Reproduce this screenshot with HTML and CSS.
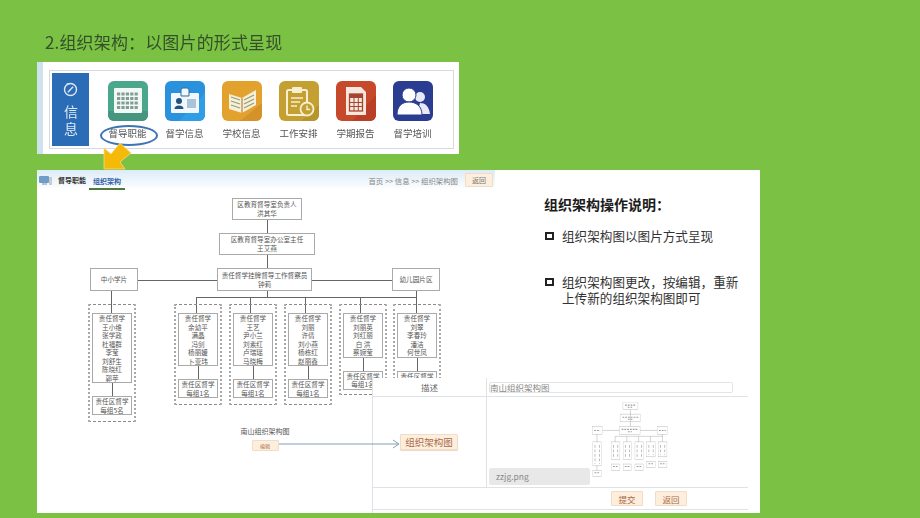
FILE: index.html
```html
<!DOCTYPE html>
<html lang="zh-CN">
<head>
  <meta charset="UTF-8" />
  <title>组织架构</title>
  <link rel="stylesheet" href="styles.css">
</head>
<body>
  <div class="slide">
    <h1 class="slide-title">2.组织架构：以图片的形式呈现</h1>

    <!-- 顶部菜单截图 -->
    <div class="nav-strip">
      <div class="nav-inner">
        <div class="nav-side">
          <svg class="nav-side-icon" viewBox="0 0 16 16"><circle cx="8" cy="8" r="6.4" fill="none" stroke="#dce8f5" stroke-width="1.5"/><path d="M5.2 11 L10.8 5" stroke="#dce8f5" stroke-width="1.5" fill="none"/><path d="M4 1.6 L6 2.4" stroke="#dce8f5" stroke-width="1.2"/></svg>
          <span class="nav-side-text">信息</span>
        </div>

        <div class="nav-item">
          <svg class="tile" viewBox="0 0 40 40">
            <rect width="40" height="40" rx="6" fill="#4ba78b"/>
            <path d="M0 30 H40 V34 a6 6 0 0 1 -6 6 H6 a6 6 0 0 1 -6 -6 Z" fill="#46957e"/>
            <rect x="6" y="7" width="28" height="25" rx="1" fill="#f4f8f5"/>
            <path d="M9 13 h22 M9 17.500 h22 M9 22 h22 M9 26.500 h22" stroke="#7f9f96" stroke-width="3" stroke-dasharray="3.200 1.200"/>
          </svg>
          <span class="nav-label">督导职能</span>
          <span class="ring"></span>
        </div>

        <div class="nav-item">
          <svg class="tile" viewBox="0 0 40 40">
            <rect width="40" height="40" rx="6" fill="#2a91dc"/>
            <path d="M40 12 V34 a6 6 0 0 1 -6 6 H14 Z" fill="#2f9ee6"/>
            <rect x="6" y="12" width="28" height="20" rx="1" fill="#f2f7fb"/>
            <path d="M16 12 v-3 a2 2 0 0 1 2 -2 h4 a2 2 0 0 1 2 2 v3 v3 h-8 Z" fill="#f2f7fb" stroke="#2a6fa8"/>
            <circle cx="14" cy="20" r="3" fill="#24527e"/>
            <path d="M9.500 28 a4.500 3.500 0 0 1 9 0 Z" fill="#24527e"/>
            <rect x="22" y="18" width="9" height="9" fill="#a9c3d8"/>
          </svg>
          <span class="nav-label">督学信息</span>
        </div>

        <div class="nav-item">
          <svg class="tile" viewBox="0 0 40 40">
            <rect width="40" height="40" rx="6" fill="#e3a12d"/>
            <path d="M40 22 V34 a6 6 0 0 1 -6 6 H18 Z" fill="#d6922a"/>
            <path d="M7 13 L20 17 L34 9 V24 L20 32 L7 28 Z" fill="#f7efd9"/>
            <path d="M20 17 V32" stroke="#c59a55" stroke-width="1.500"/>
            <path d="M9 16 l9 3 M9 20 l9 3 M9 24 l9 3 M22 19 l10 -5 M22 23 l10 -5 M22 27 l10 -5" stroke="#8fa173" stroke-width="1.200"/>
          </svg>
          <span class="nav-label">学校信息</span>
        </div>

        <div class="nav-item">
          <svg class="tile" viewBox="0 0 40 40">
            <rect width="40" height="40" rx="6" fill="#c4a032"/>
            <path d="M40 24 V34 a6 6 0 0 1 -6 6 H22 Z" fill="#b8942d"/>
            <rect x="8" y="9" width="20" height="25" rx="1.500" fill="none" stroke="#f6efd2" stroke-width="2"/>
            <rect x="13" y="6" width="10" height="6" rx="1" fill="#f6efd2"/>
            <path d="M12 17 h12 M12 21 h9 M12 25 h6" stroke="#f6efd2" stroke-width="1.600"/>
            <circle cx="28" cy="28" r="6.500" fill="#c4a032" stroke="#f6efd2" stroke-width="1.800"/>
            <path d="M28 24.500 V28.500 H31" fill="none" stroke="#f6efd2" stroke-width="1.400"/>
          </svg>
          <span class="nav-label">工作安排</span>
        </div>

        <div class="nav-item">
          <svg class="tile" viewBox="0 0 40 40">
            <rect width="40" height="40" rx="6" fill="#c7492c"/>
            <path d="M40 14 V34 a6 6 0 0 1 -6 6 H16 Z" fill="#b94026"/>
            <path d="M10 6 H25 L30 11 V34 H10 Z" fill="#f5e9df"/>
            <rect x="13.500" y="13" width="13" height="17" fill="none" stroke="#a8452f" stroke-width="1.300"/>
            <rect x="13.500" y="13" width="13" height="4" fill="#a8452f"/>
            <path d="M13.500 21.500 h13 M13.500 25.500 h13 M18 17 v13 M22.300 17 v13" stroke="#a8452f" stroke-width="1"/>
          </svg>
          <span class="nav-label">学期报告</span>
        </div>

        <div class="nav-item">
          <svg class="tile" viewBox="0 0 40 40">
            <rect width="40" height="40" rx="6" fill="#2b3d90"/>
            <circle cx="27" cy="16" r="5" fill="#e8ebf5"/>
            <path d="M27 22 c5 0 9 3 10 11 H24 Z" fill="#e8ebf5"/>
            <circle cx="16" cy="14" r="7" fill="#fff" stroke="#2b3d90"/>
            <path d="M16 21 c-7 0 -12 4 -12 13 H29 c0 -9 -6 -13 -13 -13 Z" fill="#fff" stroke="#2b3d90"/>
          </svg>
          <span class="nav-label">督学培训</span>
        </div>
      </div>
    </div>

    <svg class="pointer" viewBox="0 0 29 28"><path d="M1 6 V27 H22 L17 20 L28 11 L17 1 L8 12 Z" fill="#f5ba08" stroke="#f8d98a" stroke-width="0.800"/></svg>

    <!-- 系统页面截图 -->
    <div class="screen">
      <div class="board">
        <div class="page-bar">
          <svg class="page-icon" viewBox="0 0 14 11"><rect x="0" y="1" width="10" height="7" rx="1" fill="#6f9cc8"/><rect x="10" y="2" width="3" height="8" fill="#c8ccd2"/><rect x="3" y="8" width="5" height="2" fill="#b8c4d2"/></svg>
          <span class="page-tab">督导职能</span>
          <span class="page-tab current">组织架构</span>
          <span class="crumbs">首页 &gt;&gt; 信息 &gt;&gt; 组织架构图</span>
          <span class="btn back">返回</span>
        </div>

        <div class="node n-head">区教育督导室负责人<br>洪其华</div>
        <div class="node n-office">区教育督导室办公室主任<br>王艾燕</div>
        <div class="node n-lead">责任督学挂牌督导工作督察员<br>钟莉</div>
        <div class="node n-primary">中小学片</div>
        <div class="node n-kinder">幼儿园片区</div>

        <div class="line v l-a"></div>
        <div class="line v l-b"></div>
        <div class="line v l-c"></div>
        <div class="line h l-d"></div>
        <div class="line h l-e"></div>
        <div class="line h l-f"></div>
        <div class="line v l-g"></div>
        <div class="line v l-1"></div>
        <div class="line v l-2"></div>
        <div class="line v l-3"></div>
        <div class="line v l-4"></div>
        <div class="line v l-5"></div>

        <div class="col col-0">
          <div class="staff">责任督学<br>王小维<br>张学政<br>杜福群<br>李莹<br>刘舒生<br>陈晓红<br>郭苹</div>
          <div class="quota">责任区督学<br>每组5名</div>
        </div>
        <div class="col col-1">
          <div class="staff">责任督学<br>余幼平<br>满晶<br>冯剑<br>杨丽媛<br>卜亚玮</div>
          <div class="quota">责任区督学<br>每组1名</div>
        </div>
        <div class="col col-2">
          <div class="staff">责任督学<br>王艺<br>尹小兰<br>刘素红<br>卢瑞瑶<br>马晓梅</div>
          <div class="quota">责任区督学<br>每组1名</div>
        </div>
        <div class="col col-3">
          <div class="staff">责任督学<br>刘丽<br>许倩<br>刘小燕<br>杨栋红<br>赵丽鑫</div>
          <div class="quota">责任区督学<br>每组1名</div>
        </div>
        <div class="col col-4">
          <div class="staff">责任督学<br>刘丽英<br>刘红丽<br>白 洪<br>蔡婉莹</div>
          <div class="quota">责任区督学<br>每组1名</div>
        </div>
        <div class="col col-5">
          <div class="staff">责任督学<br>刘翠<br>李春玲<br>潘洁<br>何世凤</div>
          <div class="quota">责任区督学</div>
        </div>

        <div class="chart-file">
          <span>南山组织架构图</span>
          <span class="btn edit">编辑</span>
        </div>
      </div>

      <div class="notes">
        <h2>组织架构操作说明：</h2>
        <ul>
          <li>组织架构图以图片方式呈现</li>
          <li>组织架构图更改，按编辑，重新上传新的组织架构图即可</li>
        </ul>
      </div>

      <!-- 编辑弹出的表单 -->
      <div class="edit-form">
        <div class="cell label">描述</div>
        <div class="cell value"><div class="desc-input">南山组织架构图</div></div>
        <div class="cell label"><span class="btn pick">组织架构图</span></div>
        <div class="cell value upload">
          <div class="file-name">zzjg.png</div>
          <svg class="thumb" viewBox="88 198 354 225" preserveAspectRatio="none">
            <g fill="#fff" stroke="#bbb" vector-effect="non-scaling-stroke" stroke-width="1.500">
              <rect x="232" y="198" width="70" height="22"/>
              <rect x="219" y="233" width="96" height="22"/>
              <rect x="217" y="268" width="95" height="23"/>
              <rect x="90" y="268" width="48" height="23"/>
              <rect x="392" y="268" width="48" height="23"/>
              <rect x="92" y="313" width="40" height="69"/>
              <rect x="92" y="395" width="40" height="18"/>
              <rect x="178" y="313" width="40" height="51"/>
              <rect x="178" y="377" width="40" height="18"/>
              <rect x="233" y="313" width="40" height="51"/>
              <rect x="233" y="377" width="40" height="18"/>
              <rect x="288" y="313" width="40" height="51"/>
              <rect x="288" y="377" width="40" height="18"/>
              <rect x="343" y="313" width="40" height="43"/>
              <rect x="343" y="369" width="40" height="18"/>
              <rect x="397" y="313" width="40" height="43"/>
              <rect x="397" y="369" width="40" height="18"/>
            </g>
            <path d="M138 280 H217 M312 280 H392 M267 220 V268 M196 297 H416 M111 291 V313 M416 291 V313 M196 297 V313 M250 297 V313 M305 297 V313 M360 297 V313 M111 382 V395" stroke="#999" stroke-width="1.500" fill="none"/>
            <path d="M242 207 h50 M254 213 h26 M230 242 h74 M255 248 h24 M226 277 h78 M256 284 h18 M98 280 h28 M400 280 h32 M102 322 V376 M188 322 V358 M243 322 V358 M298 322 V358 M353 322 V350 M407 322 V350 M122 322 V376 M208 322 V358 M263 322 V358 M318 322 V358 M373 322 V350 M427 322 V350 M100 402 h24 M186 384 h24 M241 384 h24 M296 384 h24 M351 376 h24 M405 376 h24" stroke="#9a9a9a" stroke-width="3" stroke-dasharray="8 5" fill="none"/>
          </svg>
        </div>
        <div class="cell actions">
          <span class="btn">提交</span>
          <span class="btn">返回</span>
        </div>
      </div>

      <svg class="link-arrow" viewBox="0 0 122 10"><path d="M0 5 H119 M114 1 L120 5 L114 9" fill="none" stroke="#7fa0b8" stroke-width="1"/></svg>
    </div>
  </div>
</body>
</html>
```

FILE: styles.css
```css
* {
  box-sizing: border-box;
}

body {
  margin: 0;
  background: #7bc143;
  font-family: "Noto Sans CJK SC", "Liberation Sans", sans-serif;
}

.slide {
  position: relative;
  width: 920px;
  height: 518px;
  padding: 30px 0 0 37px;
  overflow: hidden;
  filter: blur(0.4px);
}

.slide-title {
  margin: 0 0 8px 8px;
  height: 24px;
  font-size: 17px;
  line-height: 24px;
  letter-spacing: 0.15px;
  font-weight: 400;
  color: #33502a;
}

/* menu strip */
.nav-strip {
  width: 422px;
  height: 92px;
  padding: 8px 5px 5px 6px;
  background: #fff;
  border-left: 6px solid #cfe3ee;
}

.nav-inner {
  display: flex;
  height: 79px;
  padding: 2px 0 2px 2px;
  border: 1px solid #d6d9e2;
}

.nav-side {
  display: flex;
  flex-direction: column;
  align-items: center;
  width: 37px;
  margin-right: 10px;
  padding-top: 9px;
  background: #2a6db6;
  color: #dce8f5;
}

.nav-side-icon {
  width: 15px;
  height: 15px;
  margin-bottom: 8px;
}

.nav-side-text {
  writing-mode: vertical-rl;
  font-size: 14px;
  line-height: 17px;
  letter-spacing: 3px;
}

.nav-item {
  position: relative;
  display: flex;
  flex-direction: column;
  align-items: center;
  width: 57px;
  padding-top: 8px;
}

.tile {
  width: 40px;
  height: 40px;
}

.nav-label {
  margin-top: 6px;
  font-size: 9.5px;
  line-height: 13px;
  color: #555;
  white-space: nowrap;
}

.ring {
  position: absolute;
  left: 1px;
  top: 52px;
  width: 58px;
  height: 21px;
  border: 2px solid #3f74b4;
  border-radius: 50%;
}

.pointer {
  position: absolute;
  left: 103px;
  top: 142px;
  width: 29px;
  height: 28px;
}

/* screenshot of the page */
.screen {
  position: relative;
  display: flex;
  width: 723px;
  height: 343px;
  margin-top: 16px;
  background: #fff;
}

.board {
  position: relative;
  width: 458px;
  flex: none;
}

.page-bar {
  display: flex;
  align-items: center;
  height: 20px;
  padding: 0 2px 0 2px;
  background: linear-gradient(#dcebf8, #fff);
  font-size: 7px;
  color: #666;
}

.page-icon {
  width: 14px;
  height: 11px;
  margin-right: 5px;
}

.page-tab {
  width: 31px;
  font-weight: 700;
  color: #333;
  white-space: nowrap;
}

.page-tab.current {
  width: 36px;
  height: 19px;
  padding-left: 4px;
  line-height: 21px;
  color: #2f5fa8;
  border-bottom: 2px solid #4f7a3c;
}

.crumbs {
  margin-left: auto;
  margin-right: 7px;
  font-size: 7.4px;
  color: #888;
  white-space: nowrap;
}

.btn {
  display: flex;
  align-items: center;
  justify-content: center;
  background: #fdeedd;
  border: 1px solid #f3dcc4;
  border-radius: 1px;
  color: #a8694a;
  white-space: nowrap;
}

.back {
  width: 28px;
  height: 14px;
  color: #777;
}

/* org chart */
.node,
.col,
.line,
.chart-file {
  position: absolute;
}

.node {
  display: flex;
  align-items: center;
  justify-content: center;
  text-align: center;
  background: #fff;
  border: 1px solid #aaa;
  font-size: 6.6px;
  line-height: 9px;
  color: #555;
  white-space: nowrap;
}

.n-head { left: 195px; top: 28px; width: 70px; height: 22px; }
.n-office { left: 182px; top: 63px; width: 96px; height: 22px; }
.n-lead { left: 180px; top: 98px; width: 95px; height: 23px; }
.n-primary { left: 53px; top: 98px; width: 48px; height: 23px; }
.n-kinder { left: 355px; top: 98px; width: 48px; height: 23px; }

.line {
  background: #666;
}

.line.v { width: 1px; }
.line.h { height: 1px; }

.l-a { left: 230px; top: 50px; height: 13px; }
.l-b { left: 230px; top: 85px; height: 13px; }
.l-c { left: 230px; top: 121px; height: 6px; }
.l-d { left: 101px; top: 110px; width: 79px; }
.l-e { left: 275px; top: 110px; width: 80px; }
.l-f { left: 159px; top: 127px; width: 220px; }
.l-g { left: 74px; top: 121px; height: 22px; }
.l-1 { left: 159px; top: 127px; height: 16px; }
.l-2 { left: 213px; top: 127px; height: 16px; }
.l-3 { left: 268px; top: 127px; height: 16px; }
.l-4 { left: 323px; top: 127px; height: 16px; }
.l-5 { left: 379px; top: 121px; height: 22px; }

.col {
  top: 134px;
  width: 48px;
  padding: 8px 2px 0 2px;
  border-style: dashed dotted;
  border-color: #8a8a8a #a8a8a8;
  border-width: 1px 2px;
  display: flex;
  flex-direction: column;
  font-size: 6.6px;
  line-height: 8.5px;
  color: #555;
  text-align: center;
  white-space: nowrap;
}

.col-0 { left: 51px; height: 118px; }
.col-1 { left: 137px; height: 101px; }
.col-2 { left: 192px; height: 101px; }
.col-3 { left: 247px; height: 101px; }
.col-4 { left: 302px; height: 91px; }
.col-5 { left: 356px; height: 91px; }

.staff {
  border: 1px solid #aaa;
  background: #fff;
}

.quota {
  position: relative;
  height: 19px;
  margin-top: 13px;
  border: 1px solid #aaa;
  background: #fff;
}

.quota::before {
  content: "";
  position: absolute;
  left: 50%;
  top: -14px;
  width: 1px;
  height: 13px;
  background: #666;
}

.chart-file {
  left: 202px;
  top: 256px;
  display: flex;
  flex-direction: column;
  align-items: center;
  width: 52px;
  font-size: 7px;
  line-height: 10px;
  color: #555;
  white-space: nowrap;
}

.edit {
  width: 27px;
  height: 11px;
  margin-top: 4px;
  font-size: 5px;
}

/* notes on the right */
.notes {
  padding: 24px 0 0 49px;
  color: #333;
}

.notes h2 {
  margin: 0 0 14px 0;
  font-size: 14px;
  line-height: 20px;
  font-weight: 700;
  color: #1c1c1c;
}

.notes ul {
  margin: 0;
  padding: 0;
  list-style: none;
}

.notes li {
  position: relative;
  width: 196px;
  padding-left: 18px;
  margin-bottom: 30px;
  font-size: 12.6px;
  line-height: 16px;
}

.notes li::before {
  content: "";
  position: absolute;
  left: 1px;
  top: 4px;
  width: 5px;
  height: 4px;
  border: 2px solid #222;
}

/* edit form over the chart */
.edit-form {
  position: absolute;
  left: 335px;
  top: 208px;
  width: 388px;
  height: 135px;
  padding: 0 12px 3px 0;
  background: #fff;
  border-left: 1px solid #dde3e8;
  display: grid;
  grid-template-columns: 114px 1fr;
  grid-template-rows: 19px 91px 22px;
  font-size: 8.5px;
  color: #666;
}

.cell {
  border-bottom: 1px solid #dde3e8;
}

.cell.label {
  display: flex;
  align-items: center;
  justify-content: center;
  border-right: 1px solid #dde3e8;
}

.cell.value {
  padding: 4px 15px 0 2px;
}

.desc-input {
  height: 11px;
  line-height: 8px;
  border: 1px solid #e4e4e4;
  border-radius: 2px;
  color: #888;
}

.upload {
  display: flex;
  gap: 2px;
}

.cell.upload {
  padding: 5px 0 2px 2px;
  align-items: flex-end;
}

.file-name {
  width: 101px;
  height: 17px;
  padding-left: 7px;
  background: #e8e8e8;
  border-radius: 2px;
  color: #888;
  line-height: 17px;
}

.thumb {
  align-self: flex-start;
  width: 76px;
  height: 78px;
}

.pick {
  width: 58px;
  height: 16px;
  margin-left: -1px;
  font-size: 9.5px;
  box-shadow: 0 1px 1px #ead9c8;
}

.cell.actions {
  grid-column: 1 / 3;
  display: flex;
  gap: 12px;
  padding: 3px 0 0 238px;
}

.actions .btn {
  width: 32px;
  height: 15px;
}

.link-arrow {
  position: absolute;
  left: 242px;
  top: 269px;
  width: 122px;
  height: 10px;
}
```
